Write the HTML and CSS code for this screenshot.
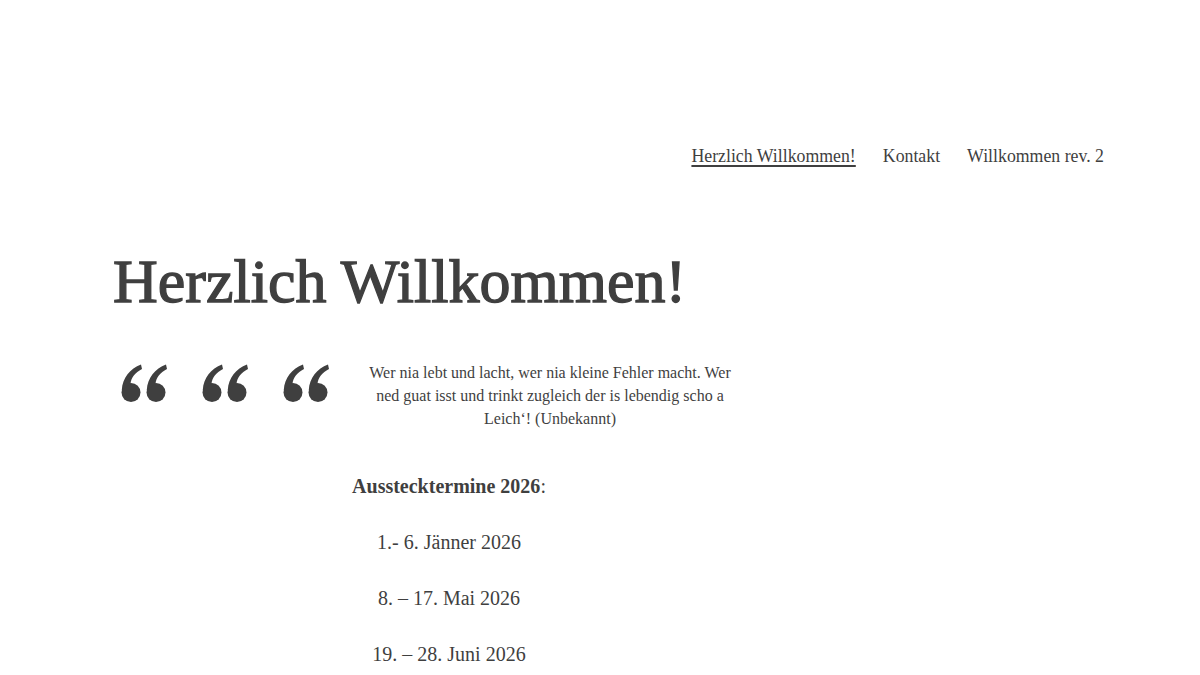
FILE: index.html
```html
<!DOCTYPE html>
<html lang="de">
<head>
<meta charset="utf-8">
<title>Herzlich Willkommen!</title>
<link rel="stylesheet" href="styles.css">
</head>
<body>
<header class="site-header">
  <nav class="menu">
    <a class="menu-item current" href="#">Herzlich Willkommen!</a>
    <a class="menu-item" href="#">Kontakt</a>
    <a class="menu-item" href="#">Willkommen rev. 2</a>
  </nav>
</header>
<main class="content">
  <h1 class="title">Herzlich Willkommen!</h1>
  <div class="quote-row">
    <div class="marks">
      <svg class="mark" viewBox="0 0 46 38" aria-hidden="true">
        <g fill="#3f3f3f">
          <circle cx="10" cy="28.5" r="9.5"/>
          <path d="M20 0.5 L21 5 C14 8.5 10 14 9.5 20 L0.8 26 C1.5 14 9 4.5 20 0.5 Z"/>
          <circle cx="35" cy="28.5" r="9.5"/>
          <path d="M45 0.5 L46 5 C39 8.5 35 14 34.5 20 L25.8 26 C26.5 14 34 4.5 45 0.5 Z"/>
        </g>
      </svg>
      <svg class="mark" viewBox="0 0 46 38" aria-hidden="true">
        <g fill="#3f3f3f">
          <circle cx="10" cy="28.5" r="9.5"/>
          <path d="M20 0.5 L21 5 C14 8.5 10 14 9.5 20 L0.8 26 C1.5 14 9 4.5 20 0.5 Z"/>
          <circle cx="35" cy="28.5" r="9.5"/>
          <path d="M45 0.5 L46 5 C39 8.5 35 14 34.5 20 L25.8 26 C26.5 14 34 4.5 45 0.5 Z"/>
        </g>
      </svg>
      <svg class="mark" viewBox="0 0 46 38" aria-hidden="true">
        <g fill="#3f3f3f">
          <circle cx="10" cy="28.5" r="9.5"/>
          <path d="M20 0.5 L21 5 C14 8.5 10 14 9.5 20 L0.8 26 C1.5 14 9 4.5 20 0.5 Z"/>
          <circle cx="35" cy="28.5" r="9.5"/>
          <path d="M45 0.5 L46 5 C39 8.5 35 14 34.5 20 L25.8 26 C26.5 14 34 4.5 45 0.5 Z"/>
        </g>
      </svg>
    </div>
    <p class="quote-text">Wer nia lebt und lacht, wer nia kleine Fehler macht. Wer ned guat isst und trinkt zugleich der is lebendig scho a Leich‘! (Unbekannt)</p>
  </div>
  <section class="dates">
    <p class="dates-title"><strong>Ausstecktermine 2026</strong>:</p>
    <p>1.- 6. Jänner 2026</p>
    <p>8. – 17. Mai 2026</p>
    <p>19. – 28. Juni 2026</p>
  </section>
</main>
</body>
</html>
```
FILE: styles.css
```css
html, body {
  margin: 0;
  padding: 0;
  background: #ffffff;
}
body {
  font-family: "Liberation Serif", "Times New Roman", serif;
  color: #3f3f3f;
  width: 1200px;
  overflow: hidden;
}
.site-header {
  display: flex;
  justify-content: flex-end;
  padding: 144px 96px 0 0;
}
.menu {
  display: flex;
  gap: 27px;
}
.menu-item {
  font-size: 17.8px;
  line-height: 24px;
  color: #3f3f3f;
  text-decoration: none;
}
.menu-item.current {
  text-decoration: underline;
  text-decoration-thickness: 2px;
  text-underline-offset: 3px;
}
.content {
  padding-left: 113px;
  width: 672px;
}
.title {
  margin: 77px 0 0 0;
  font-size: 62px;
  line-height: 72px;
  font-weight: normal;
  -webkit-text-stroke: 1.3px #3f3f3f;
}
.quote-row {
  display: flex;
  align-items: flex-start;
  margin-top: 44px;
}
.marks {
  display: flex;
  gap: 35px;
  padding: 3px 0 0 8px;
  width: 237px;
}
.mark {
  width: 46px;
  height: 38px;
  flex: none;
}
.quote-text {
  margin: 0;
  width: 384px;
  font-size: 16px;
  line-height: 23px;
  text-align: center;
}
.dates {
  margin-top: 42px;
  text-align: center;
}
.dates p {
  margin: 0 0 28px 0;
  font-size: 20px;
  line-height: 28px;
}
```
